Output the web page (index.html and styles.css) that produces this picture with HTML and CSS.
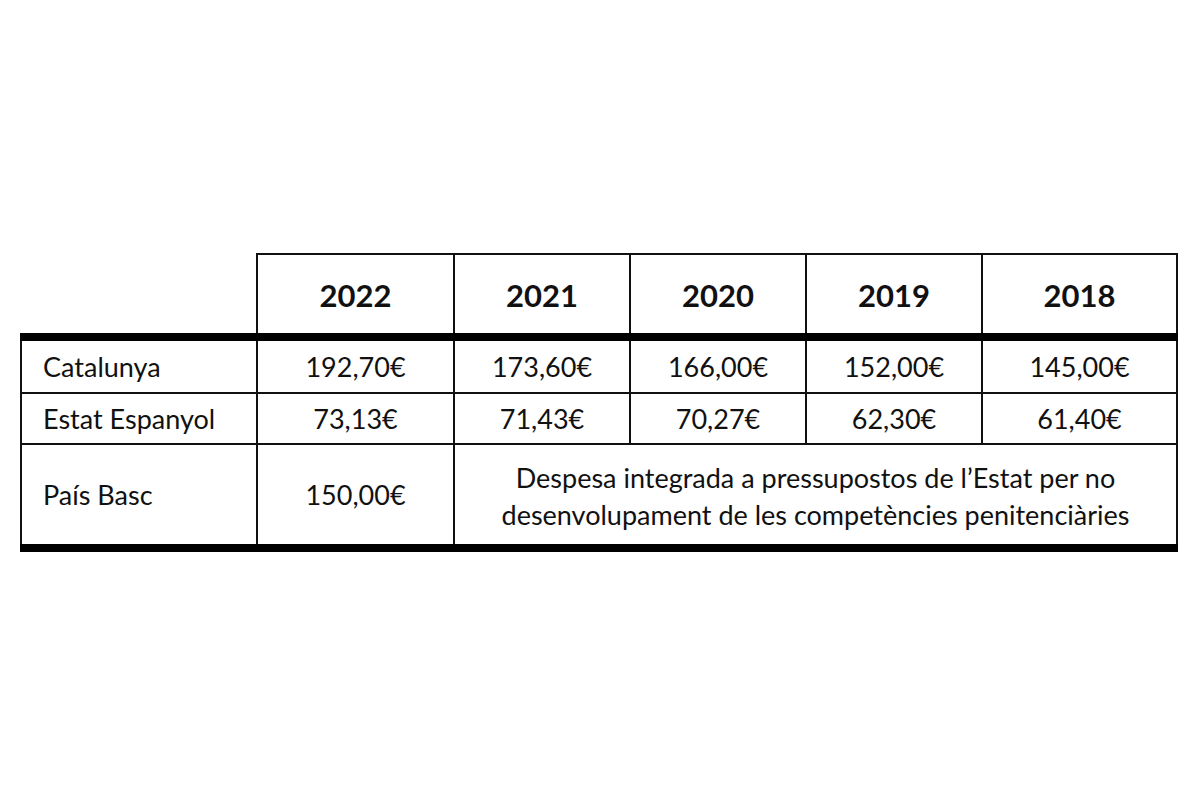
FILE: index.html
```html
<!DOCTYPE html>
<html lang="ca">
<head>
<meta charset="utf-8">
<title>Despesa</title>
<link rel="stylesheet" href="styles.css">
</head>
<body>
<main class="page">
  <table class="data">
    <colgroup>
      <col class="c-name">
      <col class="c-2022">
      <col class="c-y">
      <col class="c-y">
      <col class="c-y">
      <col class="c-2018">
    </colgroup>
    <thead>
      <tr>
        <th class="blank"></th>
        <th>2022</th>
        <th>2021</th>
        <th>2020</th>
        <th>2019</th>
        <th>2018</th>
      </tr>
    </thead>
    <tbody>
      <tr class="r1">
        <td class="name">Catalunya</td>
        <td>192,70€</td>
        <td>173,60€</td>
        <td>166,00€</td>
        <td>152,00€</td>
        <td>145,00€</td>
      </tr>
      <tr class="r2">
        <td class="name">Estat Espanyol</td>
        <td>73,13€</td>
        <td>71,43€</td>
        <td>70,27€</td>
        <td>62,30€</td>
        <td>61,40€</td>
      </tr>
      <tr class="r3">
        <td class="name">País Basc</td>
        <td>150,00€</td>
        <td colspan="4" class="note">Despesa integrada a pressupostos de l’Estat per no<br>desenvolupament de les competències penitenciàries</td>
      </tr>
    </tbody>
  </table>
</main>
</body>
</html>
```
FILE: styles.css
```css
html, body {
  margin: 0;
  padding: 0;
  background: #ffffff;
}

.page {
  width: 1200px;
  height: 800px;
  box-sizing: border-box;
  padding-top: 253px;
  padding-left: 20px;
}

.data {
  border-collapse: collapse;
  table-layout: fixed;
  width: 1158px;
  font-family: Lato, "Open Sans", "Liberation Sans", sans-serif;
  color: #111;
}

.c-name { width: 236px; }
.c-2022 { width: 197px; }
.c-y { width: 176px; }
.c-2018 { width: 195px; }

.data th,
.data td {
  border: 2px solid #111;
  padding: 0;
  text-align: center;
}

.data th {
  height: 76px;
  font-size: 31px;
  font-weight: 700;
  border-bottom: 8px solid #000;
  padding-top: 2px;
}

.data th.blank {
  border-top: none;
  border-left: none;
}

.data td {
  font-size: 27px;
  font-weight: 400;
}

.data td.name {
  text-align: left;
  padding-left: 21px;
}

.r1 td { height: 51px; }
.r2 td { height: 49px; }
.r3 td {
  height: 97px;
  border-bottom: 8px solid #000;
}

.data td.note {
  line-height: 37px;
  padding-top: 2px;
}
```
